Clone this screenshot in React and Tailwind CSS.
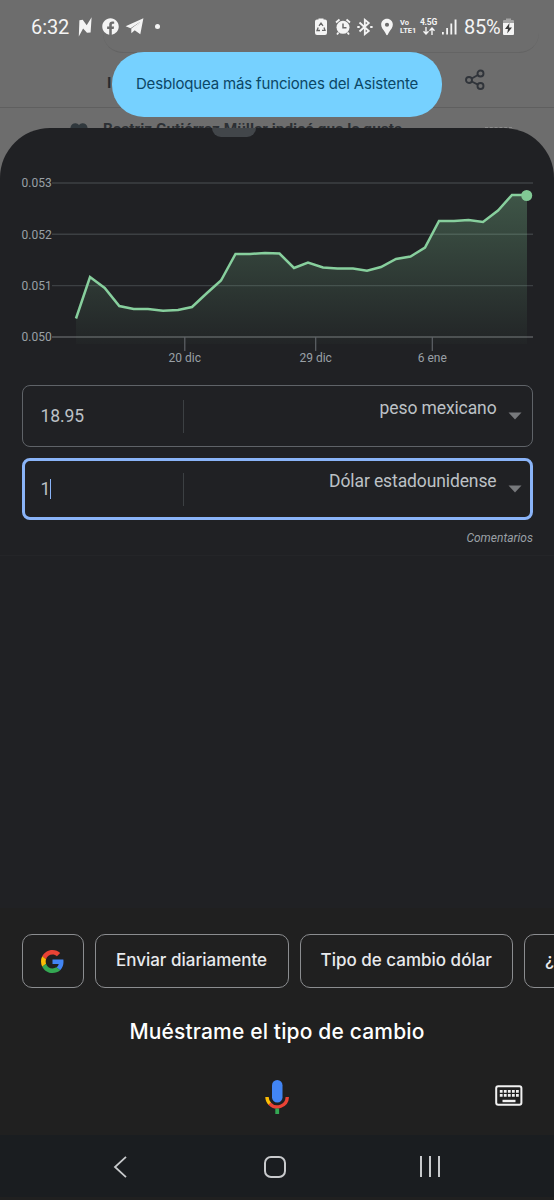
import { FaFacebook } from "react-icons/fa";
import { MdLocationPin } from "react-icons/md";

const rates = [
    [76, 318.5], [90, 277], [104.7, 288], [119.3, 306], [133.7, 309], [148, 309], [163, 310.7], [178, 310],
    [192, 307], [207, 293], [221, 280.5], [235.5, 254], [250, 254], [265, 253], [279.5, 253.5], [294, 268],
    [308, 262.5], [323, 267.5], [337.5, 268.6], [353, 268.6], [367, 270.7], [381, 267], [396, 259], [410.5, 256.5],
    [425, 247.5], [439, 221], [454, 221], [468.5, 220], [483, 222], [498, 210.5], [512, 195], [527, 195]
];
const line = rates.map(p => p.join(",")).join(" ");

const yLabels = [["0.053", 183], ["0.052", 234.3], ["0.051", 285.6], ["0.050", 337]];
const xLabels = [["20 dic", 184.8], ["29 dic", 315.7], ["6 ene", 432.3]];

function StatusBar() {
    return (
      <div className="flex h-[53px] items-center pl-[31px] text-[#f4f4f4]">
          <span className="w-[39px] text-[20px] leading-6 tracking-[-0.1px] whitespace-nowrap">6:32</span>
          <svg className="ml-[8px] shrink-0" width="14" height="20" viewBox="0 0 14 20" fill="currentColor">
              <path d="M.8 19.500 1.400 3.300l3.300-.6 4 5.600L13.600.3l-1 15.200-3.600.3-3.900-4.300z" />
          </svg>
          <FaFacebook className="ml-[10px] shrink-0" size={17} />
          <svg className="ml-[6px] shrink-0" width="19" height="17" viewBox="0 0 19 17" fill="currentColor">
              <path d="M.6 8.200 18.400.3 15.300 16.300l-6-4.200L15 4 5.600 10.300z" />
              <path d="M6.300 10.400v4.900l4-3.500L15 4z" />
          </svg>
          <span className="ml-[11px] size-[5px] shrink-0 rounded-full bg-current" />
          <div className="ml-[155px] flex items-center">
              <svg width="12" height="18" viewBox="0 0 12 18">
                  <path d="M3.5 1.5V.5h5v1H10a2 2 0 0 1 2 2V15a2 2 0 0 1-2 2H2a2 2 0 0 1-2-2V3.500a2 2 0 0 1 2-2z" fill="#f4f4f4" />
                  <path d="M4 7.800 6 5l2 2.800M9 9.500l1 2.800H7M5 12.500H2l1.200-3" fill="none" stroke="#666" strokeWidth="1.300" />
              </svg>
              <svg className="ml-[8px]" width="16" height="18" viewBox="0 0 16 18" fill="none">
                  <circle cx="8" cy="9.300" r="6.500" fill="#f4f4f4" />
                  <path d="M1 4.500 4.500 1.500M15 4.500l-3.500-3M3.500 14.500 2 16.500M12.500 14.500l1.500 2" stroke="#f4f4f4" strokeWidth="1.800" />
                  <path d="M8 5.500v4.200h3.500" stroke="#6b6b6b" strokeWidth="1.500" />
              </svg>
              <svg className="ml-[6px]" width="16" height="18" viewBox="0 0 16 18" fill="none" stroke="currentColor" strokeWidth="1.800">
                  <path d="M2.500 4.500 11.800 13 7.800 16.200V1.800l4 3.200L2.500 13.500" />
                  <path d="M.3 9h2.400M13.200 9h2.400" strokeWidth="2" />
              </svg>
              <MdLocationPin className="ml-[4px]" size={20} />
              <div className="ml-[3px] w-[18px] text-[7.500px] leading-[8px] font-bold">
                  <div>Vo</div>
                  <div>LTE1</div>
              </div>
              <div className="ml-[2px] flex w-[17px] flex-col items-center">
                  <span className="text-[8.500px] leading-[9px] font-bold tracking-[-0.2px]">4.5G</span>
                  <svg width="12" height="8" viewBox="0 0 12 8" fill="none" stroke="currentColor" strokeWidth="1.400">
                      <path d="M3 0v7M.5 4.300 3 7l2.500-2.700M9 8V1M6.500 3.700 9 1l2.500 2.700" />
                  </svg>
              </div>
              <svg className="ml-[5px]" width="15" height="16" viewBox="0 0 15 16" fill="currentColor">
                  <path d="M0 13h1.800v2.500H0zM4.200 9H6v6.500H4.200zM8.400 4.500h1.800v11H8.400zM12.600.5h1.900v15h-1.900z" />
              </svg>
              <span className="ml-[7px] w-[38px] text-[20px] leading-6 tracking-[-0.2px] whitespace-nowrap">85%</span>
              <svg className="ml-[1px]" width="11" height="18" viewBox="0 0 11 18">
                  <path d="M3 2V.5h5V2h2a1 1 0 0 1 1 1v2H0V3a1 1 0 0 1 1-1z" fill="#a5a5a5" />
                  <path d="M0 5h11v11a1 1 0 0 1-1 1H1a1 1 0 0 1-1-1z" fill="#f4f4f4" />
                  <path d="M6.500 5 2 11h3l-.8 4.500L9 9.500H6z" fill="#3c3c3c" />
              </svg>
          </div>
      </div>
    );
}

function BackgroundPage() {
    return (
      <div className="relative h-[128px] bg-[#6d6d6d]">
          <div className="absolute top-[30px] left-[103px] h-[23px] w-[436px] rounded-b-[20px] border-b border-[#646464]" />
          <StatusBar />
          <div className="flex h-[55px] items-center justify-between border-b border-[#5f5f5f] pr-[69px] pl-[107px]">
              <span className="pt-[7px] text-[15px] font-bold text-[#262b30]">I</span>
              <svg width="20" height="22" viewBox="0 0 20 22" fill="none" stroke="#30343a" strokeWidth="1.900">
                  <circle cx="4" cy="11" r="3" />
                  <circle cx="15.500" cy="4.500" r="3" />
                  <circle cx="15.500" cy="17" r="3" />
                  <path d="m6.700 9.500 6.200-3.500M6.700 12.500l6.200 3.200" />
              </svg>
          </div>
          <div className="flex h-5 items-start overflow-hidden pl-[70px] text-[#2c3034]">
              <svg className="mt-[15px] shrink-0" width="18" height="16" viewBox="0 0 18 16" fill="#30383d">
                  <path d="M9 16 1.500 8A4.500 4.500 0 0 1 9 2a4.500 4.500 0 0 1 7.500 6z" />
              </svg>
              <span className="mt-[11px] ml-[15px] text-[15.400px] leading-[20px] font-bold whitespace-nowrap">
                  Beatriz Gutiérrez Müller indicó que le gusta
              </span>
              <span className="mt-[19px] ml-[83px] w-[27px] border-t border-dashed border-[#8b8b8b]" />
          </div>
          <div className="absolute top-[52px] left-[112px] flex h-[65px] w-[330px] items-center justify-center rounded-[32px] bg-[#76d1ff]">
              <span className="font-['Inter','Roboto',sans-serif] text-[15px] tracking-[-0.160px] whitespace-nowrap text-[#0b4766]">
                  Desbloquea más funciones del Asistente
              </span>
          </div>
      </div>
    );
}

function RateChart() {
    return (
      <svg className="block shrink-0" width="554" height="257" viewBox="0 128 554 257">
          <defs>
              <linearGradient id="area" gradientUnits="userSpaceOnUse" x1="0" y1="190" x2="0" y2="344">
                  <stop offset="0" stopColor="#81c995" stopOpacity="0.32" />
                  <stop offset="1" stopColor="#81c995" stopOpacity="0.02" />
              </linearGradient>
          </defs>
          {yLabels.map(([text, y]) => (
            <g key={text}>
                <path d={`M52 ${y}H533`} stroke={text === "0.050" ? "#5a5c5f" : "#3c4043"} strokeWidth="1.400" />
                <text x="21.500" y={y + 4.200} fill="#9aa0a6" fontSize="12">{text}</text>
            </g>
          ))}
          <polygon points={`76,344 ${line} 527,344`} fill="url(#area)" />
          <polyline points={line} fill="none" stroke="#87cf9d" strokeWidth="2.500" />
          <circle cx="526.700" cy="195.500" r="5.500" fill="#81c995" />
          {xLabels.map(([text, x]) => (
            <g key={text}>
                <path d={`M${x} 337v14`} stroke="#5f6368" strokeWidth="1.200" />
                <text x={x} y="361.500" fill="#9aa0a6" fontSize="12" textAnchor="middle">{text}</text>
            </g>
          ))}
      </svg>
    );
}

function CurrencyField({ amount, currency, focused }) {
    return (
      <div
        className={
            focused
              ? "flex h-[62px] rounded-[8px] border-3 border-[#8ab4f8] pr-[8px] pl-[16px] text-[#bdc1c6]"
              : "flex h-[62px] rounded-[8px] border border-[#5f6368] pr-[10px] pl-[18px] text-[#bdc1c6]"
        }
      >
          <div className="my-auto flex h-[33px] w-[143px] items-center border-r border-[#3c4043] pb-px">
              <span className="text-[17.500px] leading-5 tracking-[-0.100px]">{amount}</span>
              {focused && <span className="h-5 w-px bg-[#8ab4f8]" />}
          </div>
          <span
            className={
                focused
                  ? "mt-[8px] ml-auto text-[17.500px] leading-6 tracking-[-0.110px]"
                  : "mt-[10px] ml-auto text-[17.500px] leading-6 tracking-[-0.110px]"
            }
          >
              {currency}
          </span>
          <svg className="my-auto ml-[11px]" width="14" height="8" viewBox="0 0 14 8">
              <path d="M.5.5h13L7 7.500z" fill="#77797c" />
          </svg>
      </div>
    );
}

function Chips() {
    return (
      <div className="flex gap-[11px] overflow-hidden pt-[26px] pl-[21.500px] font-['Inter','Roboto',sans-serif] text-[17px] font-medium text-[#e8eaed]">
          <button className="flex h-[54px] w-[62px] shrink-0 items-center justify-center rounded-[10px] border border-[#8b8d90]">
              <svg width="23" height="23" viewBox="0 0 48 48">
                  <path fill="#EA4335" d="M24 9.500c3.540 0 6.710 1.220 9.210 3.600l6.850-6.850C35.900 2.380 30.470 0 24 0 14.620 0 6.510 5.380 2.560 13.220l7.980 6.190C12.430 13.720 17.740 9.500 24 9.500z" />
                  <path fill="#4285F4" d="M46.980 24.550c0-1.570-.15-3.090-.38-4.550H24v9.020h12.940c-.58 2.960-2.260 5.480-4.780 7.180l7.730 6c4.510-4.180 7.090-10.360 7.090-17.650z" />
                  <path fill="#FBBC05" d="M10.530 28.590A14.500 14.500 0 0 1 9.770 24c0-1.600.27-3.140.76-4.590l-7.980-6.190A23.900 23.900 0 0 0 0 24c0 3.880.92 7.540 2.560 10.780z" />
                  <path fill="#34A853" d="M24 48c6.480 0 11.930-2.130 15.890-5.810l-7.730-6C30.010 37.640 27.240 38.490 24 38.490c-6.260 0-11.570-4.220-13.470-9.910l-7.980 6.190C6.510 42.620 14.620 48 24 48z" />
              </svg>
          </button>
          <button className="h-[54px] w-[194px] shrink-0 rounded-[10px] border border-[#8b8d90] whitespace-nowrap">Enviar diariamente</button>
          <button className="h-[54px] w-[213.500px] shrink-0 rounded-[10px] border border-[#8b8d90] whitespace-nowrap">Tipo de cambio dólar</button>
          <button className="h-[54px] w-[190px] shrink-0 rounded-[10px] border border-[#8b8d90] pl-[20px] text-left">¿</button>
      </div>
    );
}

function Keyboard() {
    return (
      <svg width="28" height="22" viewBox="0 0 28 22" fill="none" stroke="#f1f1f1">
          <rect x="1.200" y="1.200" width="25.200" height="18.600" rx="2" strokeWidth="2" />
          <path d="M4.800 6.300h19M4.800 10.300h19" strokeWidth="2.800" strokeDasharray="2.800 1.250" />
          <path d="M7.500 16h13" strokeWidth="2.400" />
      </svg>
    );
}

export default function App() {
    return (
      <div className="h-[1200px] w-[554px] overflow-hidden bg-[#6d6d6d] font-['Roboto',sans-serif]">
          <BackgroundPage />
          <main className="relative flex h-[1072px] flex-col overflow-hidden rounded-t-[50px] bg-[#202124]">
              <div className="absolute top-0 left-[212px] h-[9px] w-[44px] rounded-b-[12px] bg-[#42464a]" />
              <RateChart />
              <div className="flex flex-col gap-[11px] px-[21.500px]">
                  <CurrencyField amount="18.95" currency="peso mexicano" />
                  <CurrencyField amount="1" currency="Dólar estadounidense" focused />
              </div>
              <div className="h-[36px] border-b border-[#242528] pt-[10px] pr-[21px] text-right text-[12px] leading-4 text-[#9aa0a6] italic">
                  Comentarios
              </div>
              <section className="mt-auto h-[227px] shrink-0 bg-[#202020]">
                  <Chips />
                  <p className="mt-[30px] text-center font-['Inter','Roboto',sans-serif] text-[21px] leading-7 font-medium tracking-[0.160px] text-white">
                      Muéstrame el tipo de cambio
                  </p>
                  <div className="mt-[33px] grid grid-cols-3 items-start pr-[31px] pl-[31px]">
                      <span />
                      <svg className="justify-self-center" width="24" height="36" viewBox="0 0 24 36" fill="none">
                          <rect x="7" y="1" width="10.500" height="22.500" rx="5.200" fill="#4285f4" />
                          <path d="M2 18c0 2.700 1 5 2.900 6.900" stroke="#fbbc04" strokeWidth="3.400" />
                          <path d="M4.600 24.600A10.200 10.200 0 0 0 22.300 18" stroke="#ea4335" strokeWidth="3.400" />
                          <path d="M12.200 29.500V35" stroke="#34a853" strokeWidth="3.800" />
                      </svg>
                      <div className="mt-[6px] justify-self-end"><Keyboard /></div>
                  </div>
              </section>
              <nav className="flex h-[62px] shrink-0 items-center bg-[#1a1d20] pt-px pl-[113px]">
                  <svg width="14" height="22" viewBox="0 0 14 22" fill="none" stroke="#c8cacc" strokeWidth="1.800">
                      <path d="M13 .8 2 11l11 10.200" />
                  </svg>
                  <span className="ml-[137px] size-[22px] rounded-[7px] border-2 border-[#c8cacc]" />
                  <div className="ml-[134px] flex h-[21px] w-[20px] justify-between">
                      <span className="w-[2px] bg-[#c8cacc]" />
                      <span className="w-[2px] bg-[#c8cacc]" />
                      <span className="w-[2px] bg-[#c8cacc]" />
                  </div>
              </nav>
              <div className="h-[3px] shrink-0 bg-[#202020]" />
          </main>
      </div>
    );
}
